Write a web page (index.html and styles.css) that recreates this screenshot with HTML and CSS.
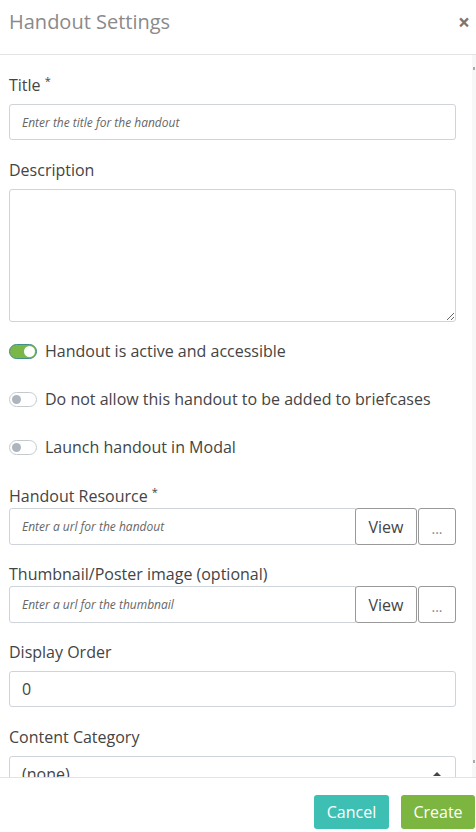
FILE: index.html
```html
<!DOCTYPE html>
<html>
<head>
<meta charset="utf-8">
<link rel="stylesheet" href="styles.css">
</head>
<body>
<div class="modal">
  <div class="modal-header">
    <h1 class="modal-title">Handout Settings</h1>
    <span class="close">&times;</span>
  </div>
  <div class="modal-body">
    <div class="content">
      <div class="group">
        <label class="label">Title <sup>*</sup></label>
        <div class="input placeholder">Enter the title for the handout</div>
      </div>
      <div class="group">
        <label class="label">Description</label>
        <textarea class="textarea"></textarea>
      </div>
      <div class="toggle-row first">
        <span class="switch on"><span class="knob"></span></span>
        <span class="toggle-text">Handout is active and accessible</span>
      </div>
      <div class="toggle-row">
        <span class="switch"><span class="knob"></span></span>
        <span class="toggle-text">Do not allow this handout to be added to briefcases</span>
      </div>
      <div class="toggle-row">
        <span class="switch"><span class="knob"></span></span>
        <span class="toggle-text">Launch handout in Modal</span>
      </div>
      <div class="group tight">
        <label class="label">Handout Resource <sup>*</sup></label>
        <div class="input-group">
          <div class="input grow placeholder">Enter a url for the handout</div>
          <button class="btn-outline view">View</button>
          <button class="btn-outline dots">...</button>
        </div>
      </div>
      <div class="group tight">
        <label class="label">Thumbnail/Poster image (optional)</label>
        <div class="input-group">
          <div class="input grow placeholder">Enter a url for the thumbnail</div>
          <button class="btn-outline view">View</button>
          <button class="btn-outline dots">...</button>
        </div>
      </div>
      <div class="group">
        <label class="label">Display Order</label>
        <div class="input value">0</div>
      </div>
      <div class="group">
        <label class="label">Content Category</label>
        <div class="input select value">
          <span>(none)</span>
          <svg class="caret" width="10" height="14" viewBox="0 0 10 14"><path d="M1 5 L5 1 L9 5 Z" fill="#444"/><path d="M1 9 L5 13 L9 9 Z" fill="#444"/></svg>
        </div>
      </div>
    </div>
    <div class="scrollbar">
      <span class="arrow up"></span>
      <span class="arrow down"></span>
    </div>
  </div>
  <div class="modal-footer">
    <button class="btn cancel">Cancel</button>
    <button class="btn create">Create</button>
  </div>
</div>
</body>
</html>
```
FILE: styles.css
```css
html, body {
  margin: 0;
  padding: 0;
  background: #fff;
}
body {
  font-family: "Open Sans", "Noto Sans", sans-serif;
  color: #444;
  width: 476px;
  height: 832px;
  overflow: hidden;
}
.modal {
  display: flex;
  flex-direction: column;
  height: 832px;
}
.modal-header {
  height: 55px;
  border-bottom: 1px solid #e3e3e3;
  display: flex;
  align-items: center;
  justify-content: space-between;
  padding: 0 6px 10px 9px;
  box-sizing: border-box;
  flex: none;
}
.modal-title {
  margin: 0;
  font-size: 20px;
  font-weight: 400;
  color: #8a8a8a;
  line-height: 28px;
}
.close {
  font-size: 21px;
  font-weight: 700;
  color: #777;
  line-height: 20px;
}
.modal-body {
  height: 722px;
  overflow: hidden;
  display: flex;
  flex: none;
}
.content {
  flex: 1;
  padding: 19px 16px 0 9px;
  box-sizing: border-box;
  min-width: 0;
}
.scrollbar {
  width: 4px;
  background: #f7f7f7;
  position: relative;
  flex: none;
}
.arrow {
  position: absolute;
  left: 1px;
  width: 2px;
  height: 3px;
  background: #aaa;
}
.arrow.up { top: 12px; }
.arrow.down { top: 705px; }
.group {
  margin-bottom: 19px;
}
.label {
  display: block;
  font-size: 16px;
  line-height: 22px;
  margin-bottom: 8px;
  color: #444;
}
.group.tight .label {
  margin-bottom: 1px;
}
.group.tight {
  margin-bottom: 18px;
}
sup {
  font-size: 11px;
  line-height: 0;
  vertical-align: 6px;
}
.input {
  height: 36px;
  border: 1px solid #ced4da;
  border-radius: 3px;
  box-sizing: border-box;
  padding: 0 12px;
  display: flex;
  align-items: center;
}
.placeholder {
  font-size: 12px;
  font-style: italic;
  color: #666;
}
.value {
  font-size: 16px;
  color: #444;
}
.textarea {
  display: block;
  width: 100%;
  height: 133px;
  box-sizing: border-box;
  border: 1px solid #ced4da;
  border-radius: 3px;
  margin: 0;
  padding: 6px 12px;
  font-family: inherit;
  background: #fff;
}
.toggle-row {
  display: flex;
  align-items: center;
  height: 21px;
  margin-bottom: 27px;
}
.toggle-row.first {
  margin-top: 19px;
}
.switch {
  width: 28px;
  height: 15px;
  border-radius: 8px;
  border: 1px solid #c6c9cc;
  box-sizing: border-box;
  background: #fff;
  position: relative;
  margin-right: 8px;
  flex: none;
}
.switch .knob {
  position: absolute;
  top: 2px;
  left: 2px;
  width: 9px;
  height: 9px;
  border-radius: 50%;
  background: #adb5bd;
}
.switch.on {
  background: #7ab648;
  border-color: #3f8f8a;
}
.switch.on .knob {
  left: auto;
  right: 1px;
  top: 1px;
  width: 11px;
  height: 11px;
  background: #fff;
}
.toggle-text {
  font-size: 16px;
  line-height: 21px;
  color: #444;
}
.input-group {
  display: flex;
  height: 37px;
}
.input-group .input {
  height: 37px;
  border-radius: 3px 0 0 3px;
}
.grow {
  flex: 1;
  min-width: 0;
}
.btn-outline {
  height: 37px;
  border: 1px solid #999;
  background: #fff;
  border-radius: 3px;
  font-family: inherit;
  box-sizing: border-box;
  padding: 0;
}
.view {
  width: 62px;
  font-size: 16px;
  color: #444;
  margin-left: -1px;
}
.dots {
  width: 38px;
  margin-left: 1px;
  font-size: 14px;
  color: #888;
  padding-top: 4px;
}
.select {
  justify-content: space-between;
}
.caret {
  margin-right: 1px;
  margin-top: 8px;
}
.modal-footer {
  border-top: 1px solid #e3e3e3;
  flex: 1;
  display: flex;
  justify-content: flex-end;
  align-items: flex-start;
  padding: 17px 1px 0 0;
  gap: 12px;
}
.btn {
  height: 34px;
  border: none;
  border-radius: 3px;
  color: #fff;
  font-family: inherit;
  font-size: 16px;
  padding: 0;
}
.cancel {
  width: 75px;
  background: #3dbfb3;
}
.create {
  width: 74px;
  background: #7cb641;
}
```
